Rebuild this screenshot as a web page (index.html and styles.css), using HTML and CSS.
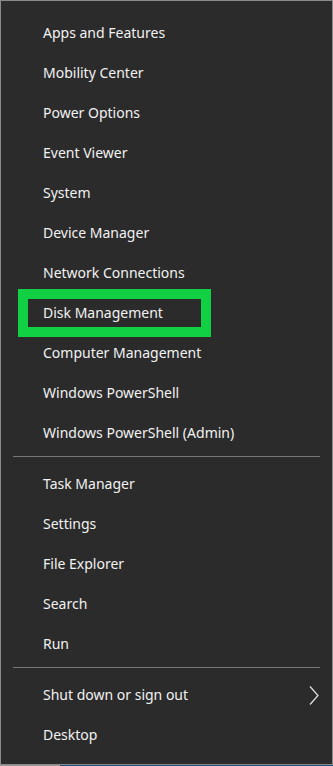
FILE: index.html
```html
<!DOCTYPE html>
<html lang="en">
<head>
    <meta charset="UTF-8">
    <meta name="viewport" content="width=device-width, initial-scale=1.0">
    <title>Quick Link Menu</title>
    <link rel="stylesheet" href="styles.css">
</head>
<body>
    <div class="menu">
        <div class="menu-group">
            <div class="menu-item">Apps and Features</div>
            <div class="menu-item">Mobility Center</div>
            <div class="menu-item">Power Options</div>
            <div class="menu-item">Event Viewer</div>
            <div class="menu-item">System</div>
            <div class="menu-item">Device Manager</div>
            <div class="menu-item">Network Connections</div>
            <div class="menu-item menu-item--marked"><span class="mark"></span>Disk Management</div>
            <div class="menu-item">Computer Management</div>
            <div class="menu-item">Windows PowerShell</div>
            <div class="menu-item">Windows PowerShell (Admin)</div>
        </div>
        <div class="separator"></div>
        <div class="menu-group">
            <div class="menu-item">Task Manager</div>
            <div class="menu-item">Settings</div>
            <div class="menu-item">File Explorer</div>
            <div class="menu-item">Search</div>
            <div class="menu-item">Run</div>
        </div>
        <div class="separator"></div>
        <div class="menu-group">
            <div class="menu-item menu-item--sub">
                <span>Shut down or sign out</span>
                <svg class="chevron" viewBox="0 0 10 19"><polyline points="1,0.5 9,9.5 1,18.5" /></svg>
            </div>
            <div class="menu-item">Desktop</div>
        </div>
    </div>
    <div class="taskbar-edge"></div>
</body>
</html>
```

FILE: styles.css
```css
*, *::before, *::after {
    box-sizing: border-box;
}
body {
    margin: 0;
    padding: 0;
    background: #2b2b2b;
    font-family: "Noto Sans", "Open Sans", sans-serif;
}
.menu {
    width: 333px;
    height: 765px;
    background: #2b2b2b;
    border: 1px solid #8a8a8a;
    padding: 12px 0 0;
    display: flex;
    flex-direction: column;
    overflow: hidden;
}
.menu-group {
    flex-shrink: 0;
    display: flex;
    flex-direction: column;
}
.menu-item {
    position: relative;
    flex-shrink: 0;
    height: 40px;
    display: flex;
    align-items: center;
    justify-content: space-between;
    padding: 0 13px 2px 42px;
    color: #f2f2f2;
    font-size: 14px;
}
.mark {
    position: absolute;
    left: 17px;
    top: -4px;
    width: 193px;
    height: 48px;
    border: 10px solid #12d043;
}
.chevron {
    width: 10px;
    height: 19px;
    margin-top: 2px;
    fill: none;
    stroke: #e6e6e6;
    stroke-width: 1.2;
}
.separator {
    flex-shrink: 0;
    height: 11px;
    padding-top: 3px;
}
.separator::before {
    content: "";
    display: block;
    margin: 0 12px;
    height: 1px;
    background: #777;
}
.taskbar-edge {
    height: 1px;
    background: linear-gradient(to right, #9a9a9a 0, #9a9a9a 60px, #1d4f7c 60px);
}
```
